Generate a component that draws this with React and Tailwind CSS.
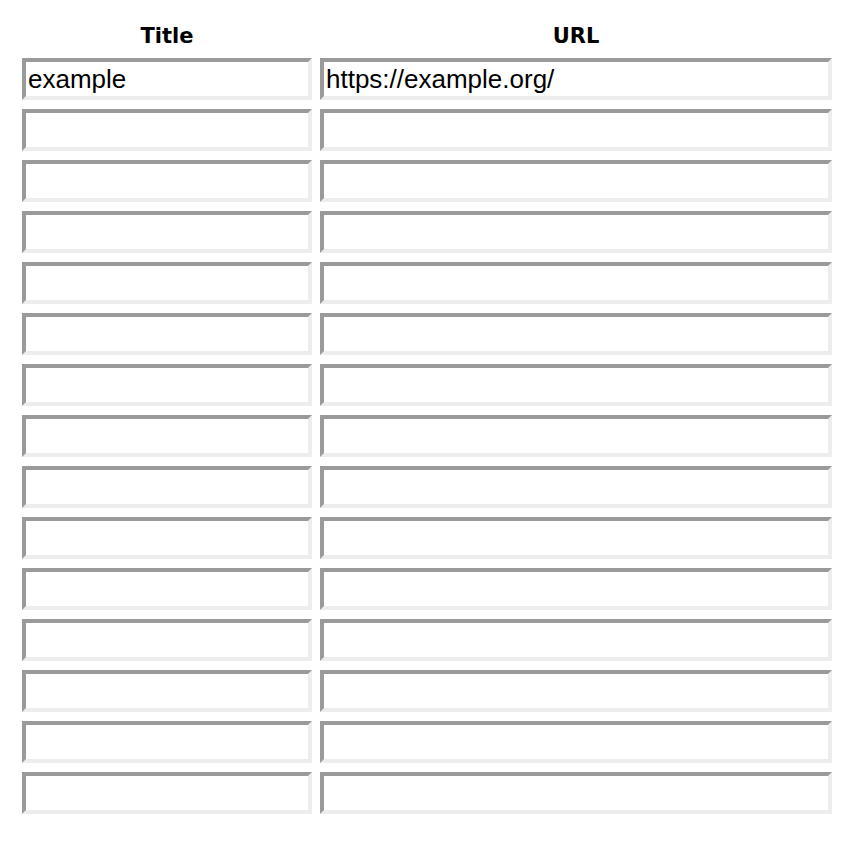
import React from "react";

const rows = [["example", "https://example.org/"]];
for (let i = 0; i < 14; i++) rows.push(["", ""]);

const inputCls =
  "block h-[42px] border-4 border-solid border-t-[#9a9a9a] border-l-[#9a9a9a] border-b-[#ededed] border-r-[#ededed] bg-white pl-[2px] pr-[2px] text-[26px] text-black outline-none [font-family:'Liberation_Sans',Arial,sans-serif]";

export default function App() {
  return (
    <div className="min-h-[842px] w-[860px] bg-white pl-[22px] pt-[24px]">
      <div className="grid grid-cols-[290px_512px] gap-x-[8px] gap-y-[9px]">
        <div className="flex h-[25px] items-center justify-center text-[21px] font-bold text-black [font-family:'DejaVu_Sans',sans-serif]">
          Title
        </div>
        <div className="flex h-[25px] items-center justify-center text-[21px] font-bold text-black [font-family:'DejaVu_Sans',sans-serif]">
          URL
        </div>
        {rows.map((r, i) => (
          <React.Fragment key={i}>
            <input readOnly value={r[0]} className={inputCls + " w-[290px]"} />
            <input readOnly value={r[1]} className={inputCls + " w-[512px]"} />
          </React.Fragment>
        ))}
      </div>
    </div>
  );
}
